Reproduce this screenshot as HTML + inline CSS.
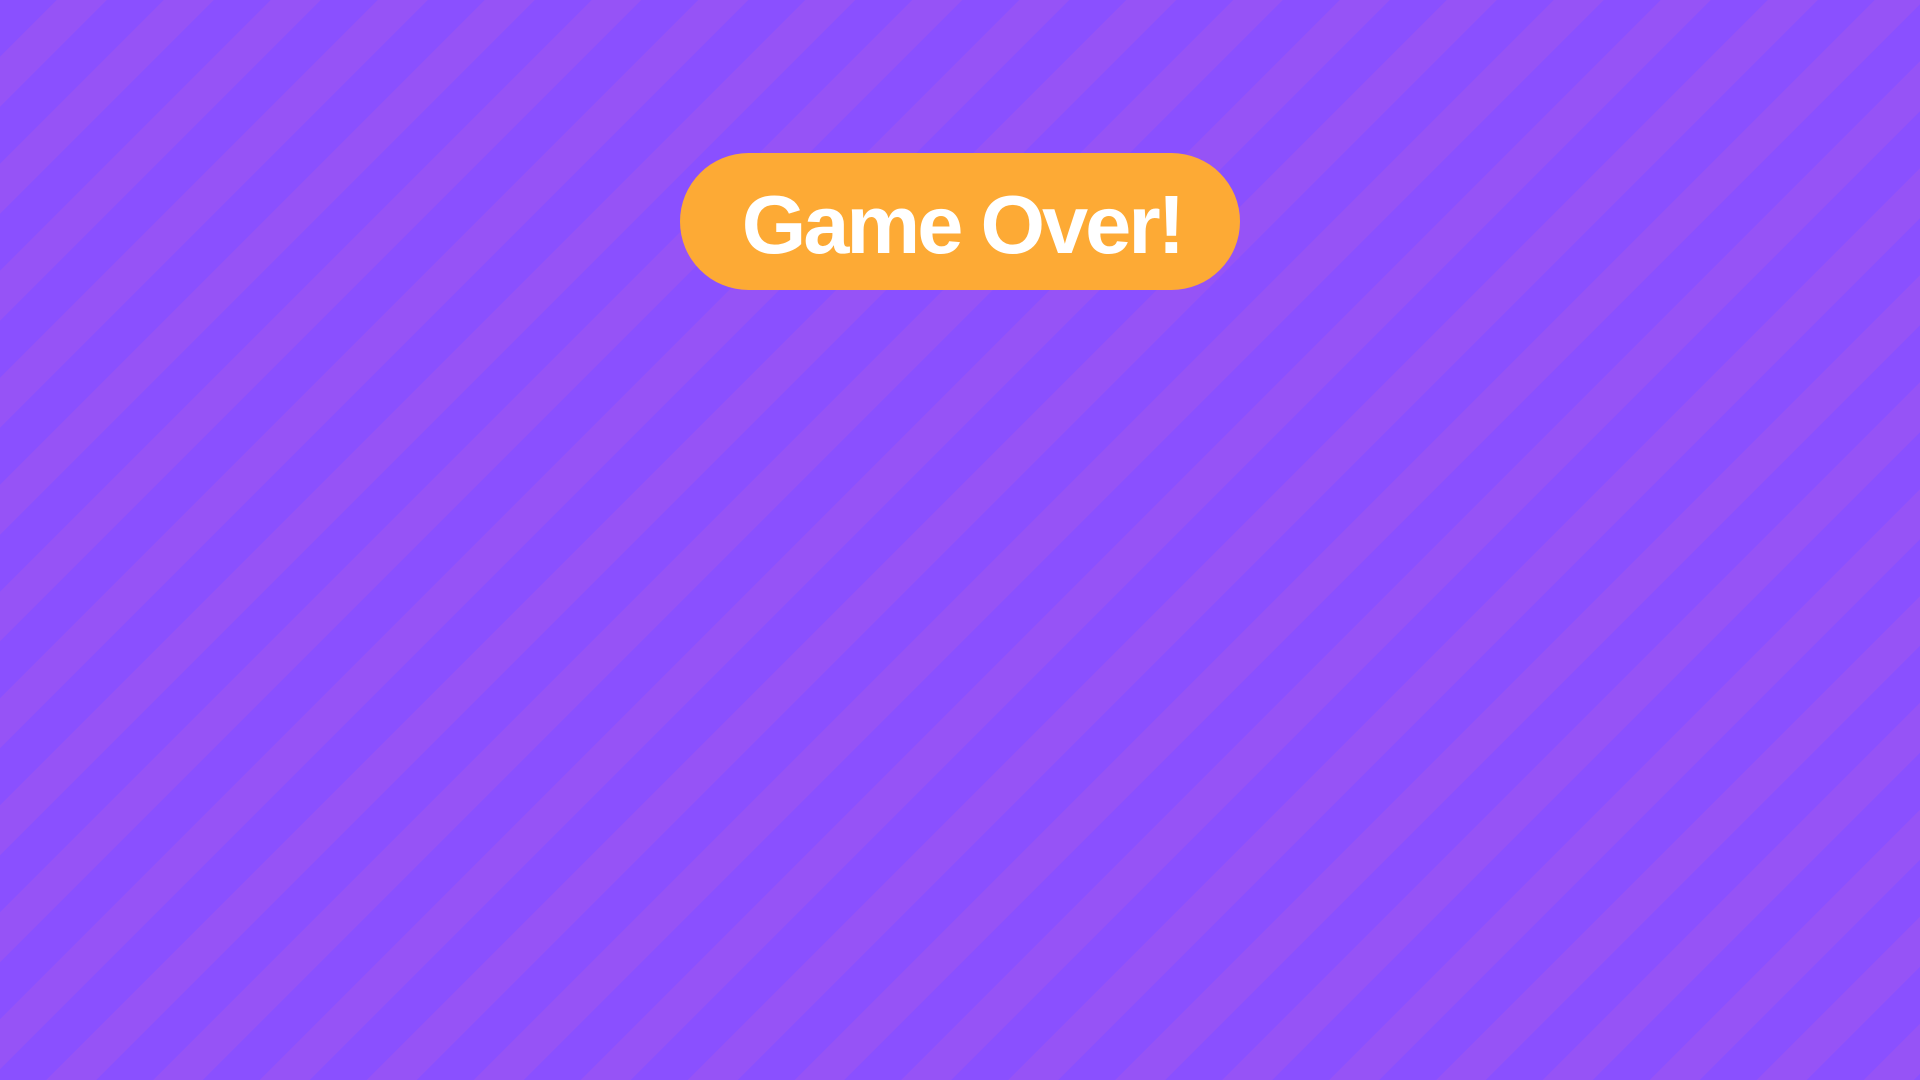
<!DOCTYPE html>
<html><head><style>
html,body{margin:0;padding:0;width:1920px;height:1080px;overflow:hidden}
body{background:repeating-linear-gradient(135deg,#8a50ff 0px,#8a50ff 40.3px,#9653f6 40.3px,#9653f6 75.6px)}
.pill{position:absolute;left:680px;top:153px;width:560px;height:137px;border-radius:69px;background:#fdaa35;
display:flex;align-items:center;justify-content:center;color:#fff;font-family:"Liberation Sans",sans-serif;font-weight:bold;font-size:83px;letter-spacing:-3px}
.pill span{position:relative;top:3px;left:2px;display:inline-block}
</style></head><body>
<div class="pill"><span>Game Over!</span></div>
</body></html>
